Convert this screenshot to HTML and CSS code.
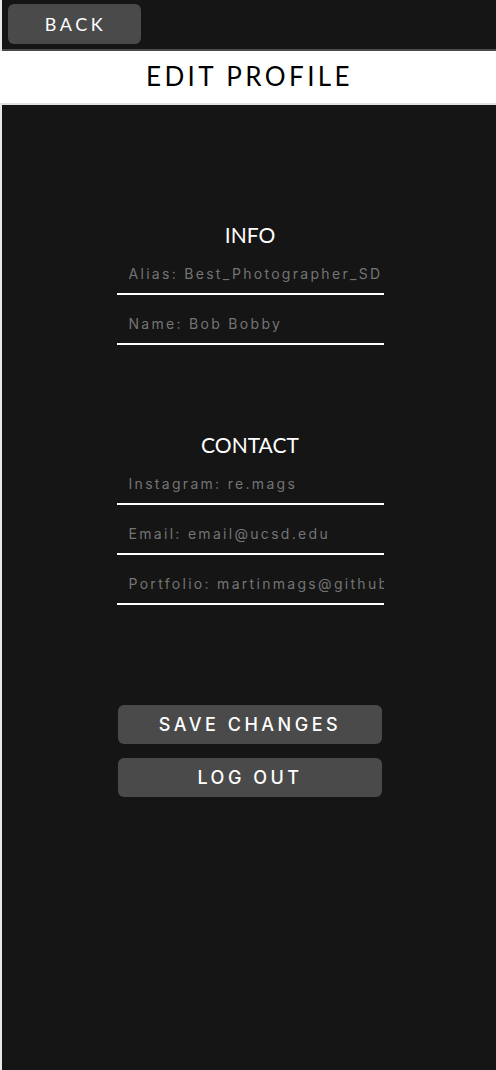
FILE: index.html
```html
<!DOCTYPE html>
<html>
<head>
<meta charset="utf-8">
<link rel="stylesheet" href="styles.css">
</head>
<body>
<div class="app">
  <div class="topbar">
    <button class="back-btn">BACK</button>
  </div>
  <div class="title-bar">
    <h1 class="title">EDIT PROFILE</h1>
  </div>
  <main class="content">
    <section class="section info">
      <h2 class="section-title">INFO</h2>
      <input class="field" type="text" placeholder="Alias: Best_Photographer_SD">
      <input class="field" type="text" placeholder="Name: Bob Bobby">
    </section>
    <section class="section contact">
      <h2 class="section-title">CONTACT</h2>
      <input class="field" type="text" placeholder="Instagram: re.mags">
      <input class="field" type="text" placeholder="Email: email@ucsd.edu">
      <input class="field" type="text" placeholder="Portfolio: martinmags@github.com">
    </section>
    <div class="actions">
      <button class="action-btn">SAVE CHANGES</button>
      <button class="action-btn">LOG OUT</button>
    </div>
  </main>
</div>
</body>
</html>
```

FILE: styles.css
```css
html, body {
  margin: 0;
  padding: 0;
}
body {
  background: #e8e8e8;
  font-family: "Lato", "Noto Sans", sans-serif;
}
.app {
  margin-left: 2px;
  min-height: 1070px;
  background: #151515;
  display: flex;
  flex-direction: column;
}
.topbar {
  height: 51px;
  padding: 4px 0 0 6px;
  box-sizing: border-box;
  border-bottom: 2px solid #4a4a4a;
}
.back-btn {
  width: 133px;
  height: 40px;
  border: none;
  border-radius: 6px;
  background: #4a4a4a;
  color: #ffffff;
  font-family: "Lato", "Noto Sans", sans-serif;
  font-size: 18px;
  letter-spacing: 3.5px;
  padding: 0 0 0 2px;
}
.title-bar {
  margin-left: -2px;
  background: #ffffff;
  height: 52px;
  border-bottom: 2px solid #e2e2e2;
  display: flex;
  align-items: center;
  justify-content: center;
}
.title {
  margin: 0 0 3px 0;
  padding-left: 3px;
  font-family: "Lato", "Noto Sans", sans-serif;
  font-weight: 400;
  font-size: 26px;
  letter-spacing: 3.4px;
  color: #000000;
}
.content {
  display: flex;
  flex-direction: column;
  align-items: center;
  padding-top: 116px;
  padding-left: 2px;
}
.section {
  display: flex;
  flex-direction: column;
  align-items: center;
  margin-bottom: 86px;
}
.section-title {
  margin: 0 0 -4px 0;
  font-family: "Lato", "Noto Sans", sans-serif;
  font-weight: 400;
  font-size: 21px;
  color: #ffffff;
  line-height: 28px;
}
.field {
  width: 267px;
  height: 50px;
  box-sizing: border-box;
  border: none;
  border-bottom: 2px solid #ffffff;
  background: transparent;
  padding: 8px 0 0 12px;
  font-family: "Inter", "Noto Sans", sans-serif;
  font-size: 14px;
  letter-spacing: 2.3px;
  color: #ffffff;
  outline: none;
}
.field::placeholder {
  color: #747474;
}
.actions {
  display: flex;
  flex-direction: column;
  gap: 14px;
  margin-top: 14px;
}
.action-btn {
  width: 264px;
  height: 39px;
  border: none;
  border-radius: 6px;
  background: #4a4a4a;
  color: #ffffff;
  font-family: "Inter", "Noto Sans", sans-serif;
  font-weight: 500;
  font-size: 18px;
  letter-spacing: 3.5px;
  padding: 0;
}
```
